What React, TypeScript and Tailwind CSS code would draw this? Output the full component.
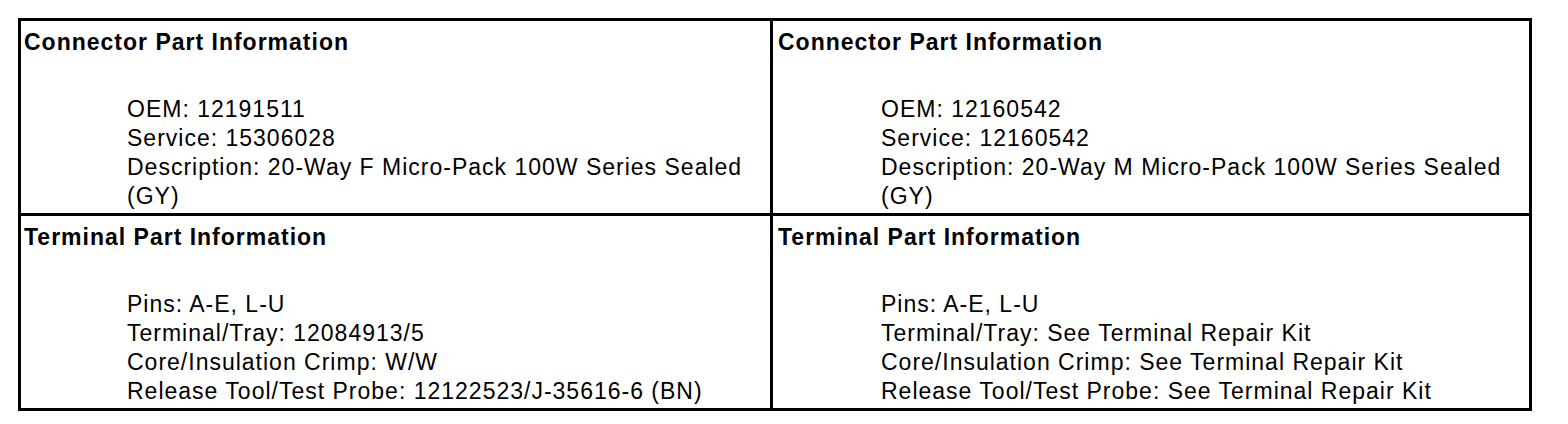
import React from "react";

type CellProps = {
  title: string;
  lines: string[];
};

function Cell({ title, lines }: CellProps) {
  return (
    <div className="bg-white h-[192px] pt-[7px]">
      <div className="font-bold leading-[29px]">{title}</div>
      <div className="mt-[38px] pl-[103px] leading-[29px]">
        {lines.map((l, i) => (
          <div key={i} className="whitespace-pre">
            {l}
          </div>
        ))}
      </div>
    </div>
  );
}

export default function App() {
  return (
    <div className="min-h-[424px] w-[1568px] bg-white pt-[18px] pl-[18px]">
      <div
        className="grid grid-cols-[749px_756px] grid-rows-[192px_192px] gap-[3px] p-[3px] bg-black w-[1514px] text-black text-[23px] tracking-[1px]"
        style={{ fontFamily: '"Liberation Sans", Arial, Helvetica, sans-serif' }}
      >
        <div className="pl-[3px] bg-white">
          <Cell
            title="Connector Part Information"
            lines={[
              "OEM: 12191511",
              "Service: 15306028",
              "Description: 20-Way F Micro-Pack 100W Series Sealed",
              "(GY)",
            ]}
          />
        </div>
        <div className="pl-[5px] bg-white">
          <Cell
            title="Connector Part Information"
            lines={[
              "OEM: 12160542",
              "Service: 12160542",
              "Description: 20-Way M Micro-Pack 100W Series Sealed",
              "(GY)",
            ]}
          />
        </div>
        <div className="pl-[3px] bg-white">
          <Cell
            title="Terminal Part Information"
            lines={[
              "Pins: A-E, L-U",
              "Terminal/Tray: 12084913/5",
              "Core/Insulation Crimp: W/W",
              "Release Tool/Test Probe: 12122523/J-35616-6 (BN)",
            ]}
          />
        </div>
        <div className="pl-[5px] bg-white">
          <Cell
            title="Terminal Part Information"
            lines={[
              "Pins: A-E, L-U",
              "Terminal/Tray: See Terminal Repair Kit",
              "Core/Insulation Crimp: See Terminal Repair Kit",
              "Release Tool/Test Probe: See Terminal Repair Kit",
            ]}
          />
        </div>
      </div>
    </div>
  );
}
